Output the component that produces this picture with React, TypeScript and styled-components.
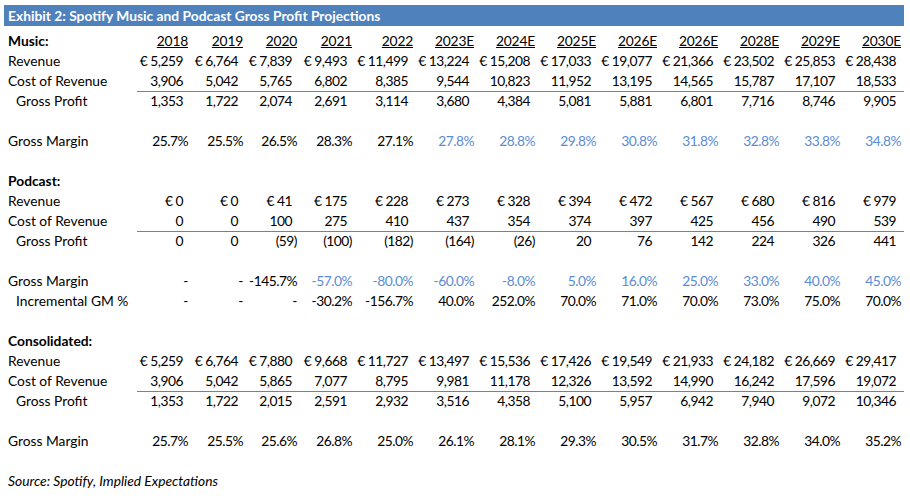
import { createGlobalStyle, styled } from 'styled-components'

const GlobalStyle = createGlobalStyle`
    html, body {
        margin: 0;
        background: #ffffff;
    }
    body {
        font-family: Lato, 'Liberation Sans', sans-serif;
        font-size: 13.8px;
        color: #000000;
    }
`

const Page = styled.div`
    width: 900px;
    padding: 5px 4px 0 4px;
`

const TitleBar = styled.div`
    height: 21px;
    line-height: 22px;
    padding-left: 4px;
    background-color: #4f81bd;
    color: #ffffff;
    font-weight: 700;
    white-space: nowrap;
`

const Table = styled.div`
    margin-top: 4px;
    display: flex;
    flex-direction: column;
`

const Row = styled.div`
    display: grid;
    grid-template-columns: 133px 54px 55px 54px 55px repeat(9, 61px);
    height: 20px;
    line-height: 21px;
    white-space: nowrap;
`

const Label = styled.div<{ $indent?: boolean; $bold?: boolean; $italic?: boolean }>`
    padding-left: ${p => (p.$indent ? '12px' : '4px')};
    font-weight: ${p => (p.$bold ? 700 : 400)};
    font-style: ${p => (p.$italic ? 'italic' : 'normal')};
    overflow: visible;
`

const Cell = styled.div<{ $tight?: boolean; $blue?: boolean; $ruled?: boolean }>`
    text-align: right;
    padding-right: ${p => (p.$tight ? '3px' : '8px')};
    color: ${p => (p.$blue ? '#5b8bd4' : '#000000')};
    letter-spacing: -0.5px;
    box-sizing: border-box;
    border-bottom: ${p => (p.$ruled ? '1px solid #808080' : '1px solid transparent')};
`

const Year = styled.span`
    letter-spacing: -0.2px;
    text-decoration: underline;
    text-underline-offset: 1px;
`

const years = ['2018', '2019', '2020', '2021', '2022', '2023E', '2024E', '2025E', '2026E', '2026E', '2028E', '2029E', '2030E']

type Line = {
    label: string
    values?: string[]
    indent?: boolean
    ruled?: boolean
    blueFrom?: number
}

const eur = (list: string[]) => list.map(v => `€ ${v}`)

const sections: { title: string; lines: Line[] }[] = [
    {
        title: 'Podcast:',
        lines: [
            { label: 'Revenue', values: eur(['0', '0', '41', '175', '228', '273', '328', '394', '472', '567', '680', '816', '979']) },
            { label: 'Cost of Revenue', ruled: true, values: ['0', '0', '100', '275', '410', '437', '354', '374', '397', '425', '456', '490', '539'] },
            { label: 'Gross Profit', indent: true, values: ['0', '0', '(59)', '(100)', '(182)', '(164)', '(26)', '20', '76', '142', '224', '326', '441'] },
            { label: '' },
            { label: 'Gross Margin', blueFrom: 3, values: ['-', '-', '-145.7%', '-57.0%', '-80.0%', '-60.0%', '-8.0%', '5.0%', '16.0%', '25.0%', '33.0%', '40.0%', '45.0%'] },
            { label: 'Incremental GM %', indent: true, values: ['-', '-', '-', '-30.2%', '-156.7%', '40.0%', '252.0%', '70.0%', '71.0%', '70.0%', '73.0%', '75.0%', '70.0%'] },
            { label: '' },
        ],
    },
    {
        title: 'Consolidated:',
        lines: [
            { label: 'Revenue', values: eur(['5,259', '6,764', '7,880', '9,668', '11,727', '13,497', '15,536', '17,426', '19,549', '21,933', '24,182', '26,669', '29,417']) },
            { label: 'Cost of Revenue', ruled: true, values: ['3,906', '5,042', '5,865', '7,077', '8,795', '9,981', '11,178', '12,326', '13,592', '14,990', '16,242', '17,596', '19,072'] },
            { label: 'Gross Profit', indent: true, values: ['1,353', '1,722', '2,015', '2,591', '2,932', '3,516', '4,358', '5,100', '5,957', '6,942', '7,940', '9,072', '10,346'] },
            { label: '' },
            { label: 'Gross Margin', values: ['25.7%', '25.5%', '25.6%', '26.8%', '25.0%', '26.1%', '28.1%', '29.3%', '30.5%', '31.7%', '32.8%', '34.0%', '35.2%'] },
            { label: '' },
        ],
    },
]

const music: Line[] = [
    { label: 'Revenue', values: eur(['5,259', '6,764', '7,839', '9,493', '11,499', '13,224', '15,208', '17,033', '19,077', '21,366', '23,502', '25,853', '28,438']) },
    { label: 'Cost of Revenue', ruled: true, values: ['3,906', '5,042', '5,765', '6,802', '8,385', '9,544', '10,823', '11,952', '13,195', '14,565', '15,787', '17,107', '18,533'] },
    { label: 'Gross Profit', indent: true, values: ['1,353', '1,722', '2,074', '2,691', '3,114', '3,680', '4,384', '5,081', '5,881', '6,801', '7,716', '8,746', '9,905'] },
    { label: '' },
    { label: 'Gross Margin', blueFrom: 5, values: ['25.7%', '25.5%', '26.5%', '28.3%', '27.1%', '27.8%', '28.8%', '29.8%', '30.8%', '31.8%', '32.8%', '33.8%', '34.8%'] },
    { label: '' },
]

// accounting format keeps room for a closing paren on plain numbers
const isTight = (v: string) => v.endsWith(')') || v.endsWith('%') || v === '-'

function DataRow({ line }: { line: Line }) {
    const { label, values, indent, ruled, blueFrom } = line
    return (
        <Row>
            <Label $indent={indent}>{label}</Label>
            {values?.map((v, i) => (
                <Cell
                    key={i}
                    $tight={isTight(v)}
                    $ruled={ruled}
                    $blue={blueFrom !== undefined && i >= blueFrom}
                >
                    {v}
                </Cell>
            ))}
        </Row>
    )
}

export default function App() {
    return (
        <Page>
            <GlobalStyle />

            {/* ======== TITLE ======== */}
            <TitleBar>Exhibit 2: Spotify Music and Podcast Gross Profit Projections</TitleBar>

            <Table>
                {/* ======== MUSIC ======== */}
                <Row>
                    <Label $bold>Music:</Label>
                    {years.map((y, i) => (
                        <Cell key={i} $tight>
                            <Year>{y}</Year>
                        </Cell>
                    ))}
                </Row>
                {music.map((line, i) => (
                    <DataRow key={i} line={line} />
                ))}

                {/* ======== PODCAST / CONSOLIDATED ======== */}
                {sections.map(section => (
                    <div key={section.title}>
                        <Row>
                            <Label $bold>{section.title}</Label>
                        </Row>
                        {section.lines.map((line, i) => (
                            <DataRow key={i} line={line} />
                        ))}
                    </div>
                ))}

                {/* ======== SOURCE ======== */}
                <Row>
                    <Label $italic>Source: Spotify, Implied Expectations</Label>
                </Row>
            </Table>
        </Page>
    )
}
